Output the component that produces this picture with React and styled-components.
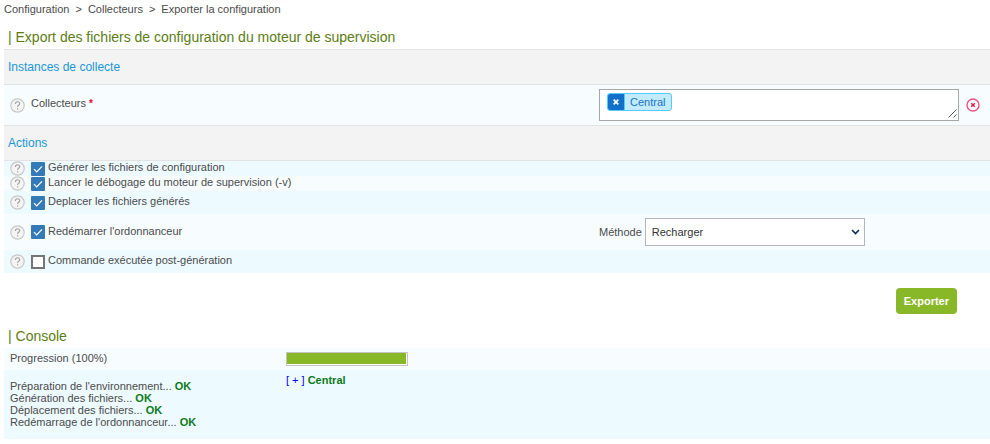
import React, { useState } from "react";
import styled, { createGlobalStyle } from "styled-components";

const GlobalStyle = createGlobalStyle`
  *, *::before, *::after { box-sizing: border-box; }
  body {
    margin: 0;
    background: #fff;
    color: #4b4b4b;
    font-family: "Liberation Sans", Arial, Helvetica, sans-serif;
    font-size: 11px;
    line-height: 12px;
  }
`;

const tones = { one: "#f7fdff", two: "#edfaff" };

const Page = styled.main`
  padding-left: 4px;
`;

const Breadcrumb = styled.nav`
  display: flex;
  gap: 6px;
  padding-top: 3px;
`;

const Crumb = styled.a`
  color: inherit;
  text-decoration: none;
`;

const Title = styled.h1`
  margin: 0;
  padding: 10px 4px 0;
  color: #5c7d12;
  font-size: 14px;
  font-weight: 400;
  line-height: 24px;
`;

const SectionTitle = styled.h2`
  margin: 0;
  padding: 0 4px;
  border: 1px solid #e3e3e3;
  border-width: 1px 0;
  background: #f3f3f3;
  color: #1a97d8;
  font-size: 12px;
  font-weight: 400;
  line-height: 34px;
`;

const Row = styled.div`
  display: grid;
  grid-template-columns: minmax(0, 595fr) minmax(0, 391fr);
  align-items: center;
  min-height: ${(p) => p.$height}px;
  background: ${(p) => tones[p.$tone]};
`;

const Field = styled.div`
  display: flex;
  align-items: center;
  padding-left: 6px;
`;

const HelpButton = styled.button`
  display: flex;
  margin: 0 6px 0 0;
  padding: 0;
  border: 0;
  background: none;
`;

const Label = styled.label`
  padding-bottom: 3px;
`;

const Required = styled.span`
  color: #f00038;
  font-size: 10px;
  font-weight: 700;
`;

const Checkbox = styled.input`
  appearance: none;
  flex: none;
  width: 14px;
  height: 14px;
  margin: 0 3px 0 0;
  border: 2px solid #757575;
  background: #fff;
  &:checked {
    border: 0;
    border-radius: 1px;
    background: #337ab7;
  }
`;

const CheckWrap = styled.span`
  position: relative;
  display: flex;
  svg {
    position: absolute;
    top: 0;
    left: 0;
    pointer-events: none;
  }
`;

const TagField = styled.div`
  display: flex;
  align-items: center;
  gap: 7px;
`;

const TagBox = styled.div`
  position: relative;
  width: 360px;
  height: 32px;
  padding: 3px 7px;
  border: 1px solid #a6a6a6;
  background: #fff;
`;

const Grip = styled.svg`
  position: absolute;
  right: 1px;
  bottom: 2px;
`;

const Tag = styled.span`
  display: inline-flex;
  height: 18px;
  border: 1px solid #57c8f8;
  border-radius: 3px;
  background: #c2ebfd;
  color: #1673c8;
  line-height: 16px;
  overflow: hidden;
`;

const TagRemove = styled.button`
  display: flex;
  align-items: center;
  justify-content: center;
  width: 17px;
  padding: 0;
  border: 0;
  border-right: 1px solid #57c8f8;
  background: #1170c9;
`;

const TagText = styled.span`
  padding: 0 6px 0 5px;
`;

const ClearButton = styled.button`
  display: flex;
  padding: 0;
  border: 0;
  background: none;
`;

const MethodField = styled.label`
  display: flex;
  align-items: center;
  gap: 3px;
`;

const SelectWrap = styled.span`
  position: relative;
  svg {
    position: absolute;
    right: 5px;
    top: 10px;
    pointer-events: none;
  }
`;

const Select = styled.select`
  appearance: none;
  display: block;
  width: 220px;
  height: 28px;
  padding: 0 6px;
  border: 1px solid #b3b7bb;
  border-radius: 0;
  background: #fff;
  color: #333;
  font: inherit;
`;

const Toolbar = styled.div`
  display: flex;
  justify-content: flex-end;
  padding: 15px 33px 0 0;
`;

const ExportButton = styled.button`
  height: 26px;
  padding: 0 8px;
  border: 0;
  border-radius: 4px;
  background: #88b828;
  color: #fff;
  font: inherit;
  font-weight: 700;
`;

const ConsoleRow = styled.div`
  display: grid;
  grid-template-columns: minmax(0, 276fr) minmax(0, 704fr);
  padding: ${(p) => p.$pad};
  background: ${(p) => tones[p.$tone]};
`;

const ProgressTrack = styled.div`
  width: 122px;
  height: 14px;
  padding: 0 1px 1px 0;
  border: 1px solid #c4c4c4;
  background: #fff;
`;

const ProgressFill = styled.div`
  height: 100%;
  background: #88b828;
`;

const Log = styled.ul`
  margin: 0;
  padding: 6px 0 0;
  list-style: none;
`;

const Ok = styled.b`
  color: #0d7a1c;
`;

const Poller = styled.div`
  display: flex;
  gap: 3px;
`;

const Toggle = styled.a`
  color: #00f;
  text-decoration: none;
`;

function Help() {
  return (
    <HelpButton type="button" aria-label="Aide">
      <svg width="15" height="15" viewBox="0 0 15 15" fill="none">
        <circle cx="7.5" cy="7.5" r="6.7" fill="#f4f4f4" stroke="#c8c8c8" strokeWidth="1.2" />
        <path d="M5.4 5.9c0-3 4.3-2.7 4.3-.2 0 1.6-2.1 1.6-2.1 3.2" stroke="#a0a0a0" strokeWidth="1.1" />
        <path d="M7 10.2h1.2v1.3H7z" fill="#a0a0a0" />
      </svg>
    </HelpButton>
  );
}

function Option({ id, label, checked }) {
  const [on, setOn] = useState(checked);
  return (
    <Field>
      <Help />
      <CheckWrap>
        <Checkbox id={id} type="checkbox" checked={on} onChange={(e) => setOn(e.target.checked)} />
        {on && (
          <svg width="14" height="14" viewBox="0 0 14 14" fill="none">
            <path d="M3 7.2l2.7 2.7L11 4.4" stroke="#fff" strokeWidth="1.2" />
          </svg>
        )}
      </CheckWrap>
      <Label htmlFor={id}>{label}</Label>
    </Field>
  );
}

const steps = [
  "Préparation de l'environnement...",
  "Génération des fichiers...",
  "Déplacement des fichiers...",
  "Redémarrage de l'ordonnanceur...",
];

export default function App() {
  const progress = 100;
  return (
    <Page>
      <GlobalStyle />
      <Breadcrumb aria-label="Fil d'Ariane">
        <Crumb href="#configuration">Configuration</Crumb>
        <span>&gt;</span>
        <Crumb href="#collecteurs">Collecteurs</Crumb>
        <span>&gt;</span>
        <Crumb href="#export">Exporter la configuration</Crumb>
      </Breadcrumb>

      <Title>| Export des fichiers de configuration du moteur de supervision</Title>
      <SectionTitle>Instances de collecte</SectionTitle>
      <Row $height={40} $tone="one">
        <Field>
          <Help />
          <Label as="span">Collecteurs <Required>*</Required></Label>
        </Field>
        <TagField>
          <TagBox>
            <Tag>
              <TagRemove type="button" aria-label="Retirer Central">
                <svg width="6" height="6" viewBox="0 0 6 6">
                  <path d="M.7.7l4.6 4.6M5.3.7L.7 5.3" stroke="#fff" strokeWidth="1.8" />
                </svg>
              </TagRemove>
              <TagText>Central</TagText>
            </Tag>
            <Grip width="9" height="9" viewBox="0 0 9 9">
              <path d="M.5 8.5l8-8M5.5 8.5l3-3" stroke="#555" strokeWidth="1" />
            </Grip>
          </TagBox>
          <ClearButton type="button" aria-label="Tout effacer">
            <svg width="14" height="14" viewBox="0 0 14 14" fill="none" stroke="#e8557c">
              <circle cx="7" cy="7" r="6" strokeWidth="1.4" />
              <path d="M5.2 5.2l3.6 3.6M8.8 5.2L5.2 8.8" stroke="#e01b48" strokeWidth="1.5" />
            </svg>
          </ClearButton>
        </TagField>
      </Row>

      <SectionTitle>Actions</SectionTitle>
      <Row $height={15} $tone="two">
        <Option id="generate" label="Générer les fichiers de configuration" checked />
      </Row>
      <Row $height={15} $tone="one">
        <Option id="debug" label="Lancer le débogage du moteur de supervision (-v)" checked />
      </Row>
      <Row $height={23} $tone="two">
        <Option id="move" label="Deplacer les fichiers générés" checked />
      </Row>
      <Row $height={36} $tone="one">
        <Option id="restart" label="Redémarrer l'ordonnanceur" checked />
        <MethodField>
          Méthode
          <SelectWrap>
            <Select defaultValue="reload">
              <option value="reload">Recharger</option>
              <option value="restart">Redémarrer</option>
            </Select>
            <svg width="9" height="8" viewBox="0 0 9 8" fill="none">
              <path d="M1 2l3.5 3.5L8 2" stroke="#0b2a52" strokeWidth="1.6" />
            </svg>
          </SelectWrap>
        </MethodField>
      </Row>
      <Row $height={23} $tone="two">
        <Option id="post" label="Commande exécutée post-génération" checked={false} />
      </Row>

      <Toolbar>
        <ExportButton type="button">Exporter</ExportButton>
      </Toolbar>

      <Title as="h2">| Console</Title>
      <ConsoleRow $tone="one" $pad="4px 0 4px 6px">
        <span>Progression (100%)</span>
        <ProgressTrack role="progressbar" aria-label="Progression" aria-valuenow={progress}>
          <ProgressFill style={{ width: `${progress}%` }} />
        </ProgressTrack>
      </ConsoleRow>
      <ConsoleRow $tone="two" $pad="4px 0 11px 6px">
        <Log>
          {steps.map((step) => (
            <li key={step}>{step} <Ok>OK</Ok></li>
          ))}
        </Log>
        <Poller>
          <Toggle href="#central">[ + ]</Toggle>
          <Ok>Central</Ok>
        </Poller>
      </ConsoleRow>
    </Page>
  );
}
